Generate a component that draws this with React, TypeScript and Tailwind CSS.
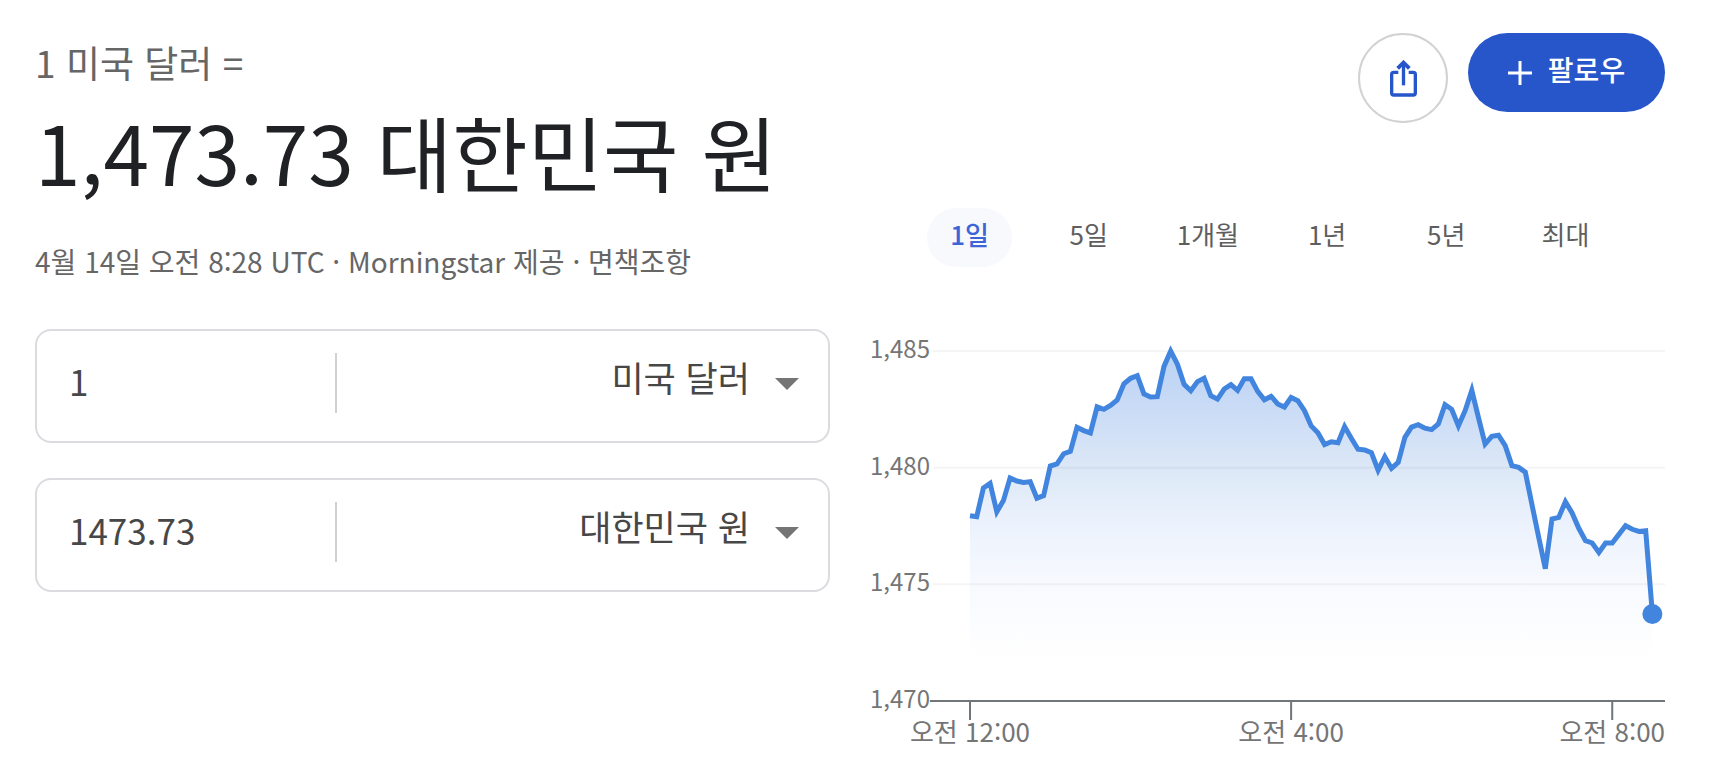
import React, { useState } from 'react';

const PERIODS = ['1일', '5일', '1개월', '1년', '5년', '최대'];
const CURRENCIES = ['미국 달러', '대한민국 원'];

// One price every 5 minutes, starting at midnight
const PRICES = [
  1477.94, 1477.9, 1479.13, 1479.33, 1478.11, 1478.59, 1479.56, 1479.43, 1479.37, 1479.4, 1478.69, 1478.8,
  1480.07, 1480.16, 1480.6, 1480.7, 1481.73, 1481.59, 1481.49, 1482.61, 1482.5, 1482.67, 1482.9, 1483.59,
  1483.83, 1483.94, 1483.16, 1483.03, 1483.04, 1484.34, 1485.0, 1484.44, 1483.57, 1483.3, 1483.69, 1483.83,
  1483.09, 1482.94, 1483.37, 1483.56, 1483.31, 1483.81, 1483.81, 1483.27, 1482.91, 1483.06, 1482.73, 1482.6,
  1483.01, 1482.87, 1482.44, 1481.79, 1481.5, 1480.99, 1481.11, 1481.07, 1481.76, 1481.26, 1480.79, 1480.76,
  1480.64, 1479.89, 1480.47, 1479.97, 1480.23, 1481.3, 1481.74, 1481.84, 1481.69, 1481.63, 1481.87, 1482.7,
  1482.5, 1481.79, 1482.44, 1483.31, 1482.16, 1481.01, 1481.34, 1481.39, 1480.94, 1480.09, 1480.01, 1479.81,
  1478.41, 1477.04, 1475.67, 1477.8, 1477.87, 1478.54, 1478.06, 1477.4, 1476.87, 1476.77, 1476.37, 1476.77,
  1476.77, 1477.14, 1477.51, 1477.36, 1477.27, 1477.3, 1473.73,
];

const CHART = { left: 100, right: 795, top: 22, bottom: 372, labelEnd: 60, step: 6.69 };

const xAt = (index: number) => CHART.left + index * CHART.step;
const yAt = (price: number) => CHART.bottom - ((price - 1470) / 15) * (CHART.bottom - CHART.top);

const Y_LABELS = [1485, 1480, 1475, 1470];
const X_LABELS = [
  { index: 0, label: '오전 12:00' },
  { index: 48, label: '오전 4:00' },
  { index: 96, label: '오전 8:00' },
];

const RateChart: React.FC = () => {
  const line = PRICES.map((price, i) => `${i === 0 ? 'M' : 'L'}${xAt(i).toFixed(1)} ${yAt(price).toFixed(1)}`).join('');
  const last = PRICES.length - 1;
  const area = `${line}V${CHART.bottom}H${CHART.left}Z`;

  return (
    <svg viewBox="0 0 795 425" className="block w-full h-auto overflow-visible" role="img" aria-label="환율 차트">
      <defs>
        <linearGradient id="rate-fill" gradientUnits="userSpaceOnUse" x1="0" y1="22" x2="0" y2="330">
          <stop offset="0" stopColor="#b9d2f4" />
          <stop offset="0.2" stopColor="#cbdcf6" />
          <stop offset="0.38" stopColor="#dce8f7" />
          <stop offset="0.58" stopColor="#edf3fd" />
          <stop offset="0.78" stopColor="#f8fafe" />
          <stop offset="1" stopColor="#ffffff" />
        </linearGradient>
      </defs>

      <path d={area} fill="url(#rate-fill)" />

      {Y_LABELS.map(value => (
        <g key={value}>
          <text x="0" y={yAt(value) + 7} fontSize="24" fill="#757575">
            {value.toLocaleString('en-US')}
          </text>
          {value !== 1470 && (
            <line
              x1={CHART.labelEnd + 3}
              x2={CHART.right}
              y1={yAt(value)}
              y2={yAt(value)}
              stroke="#000000"
              strokeOpacity="0.04"
              strokeWidth="2"
            />
          )}
        </g>
      ))}

      {/* Time axis */}
      <line x1={CHART.labelEnd} x2={CHART.right} y1={CHART.bottom} y2={CHART.bottom} stroke="#70757a" strokeWidth="2" />
      {X_LABELS.map(({ index, label }) => (
        <g key={label}>
          <line x1={xAt(index)} x2={xAt(index)} y1={CHART.bottom} y2="391" stroke="#70757a" strokeWidth="2" />
          <text x={xAt(index)} y="413" fontSize="26" fill="#757575" textAnchor="middle">
            {label}
          </text>
        </g>
      ))}

      <path d={line} fill="none" stroke="#4285de" strokeWidth="5" />
      <circle cx={xAt(last)} cy={yAt(PRICES[last])} r="10" fill="#4285de" />
    </svg>
  );
};

interface CurrencyFieldProps {
  amount: string;
  currency: string;
  onAmountChange: (value: string) => void;
  onCurrencyChange: (value: string) => void;
}

const CurrencyField: React.FC<CurrencyFieldProps> = ({ amount, currency, onAmountChange, onCurrencyChange }) => (
  <div className="flex h-[114px] border-2 border-[#dadce0] rounded-2xl text-[35px] text-[#474747]">
    <input
      type="text"
      inputMode="decimal"
      aria-label="금액"
      value={amount}
      onChange={e => onAmountChange(e.target.value)}
      className="w-[298px] h-full pl-8 pr-4 pb-3 bg-transparent outline-none"
    />
    <div className="w-0.5 h-[60px] mt-[22px] bg-[#d2d2d2]" />
    <div className="relative flex-1 h-full">
      <select
        aria-label="통화"
        value={currency}
        onChange={e => onCurrencyChange(e.target.value)}
        className="w-full h-full pr-[78px] pb-[18px] appearance-none bg-transparent text-right [text-align-last:right] outline-none"
      >
        {CURRENCIES.map(name => (
          <option key={name} value={name}>{name}</option>
        ))}
      </select>
      <svg viewBox="0 0 24 12" className="absolute right-[29px] top-[47px] w-6 h-3 pointer-events-none" fill="#757575">
        <path d="M0 0H24L12 12Z" />
      </svg>
    </div>
  </div>
);

const App: React.FC = () => {
  const [period, setPeriod] = useState('1일');
  const [fromAmount, setFromAmount] = useState('1');
  const [toAmount, setToAmount] = useState('1473.73');
  const [fromCurrency, setFromCurrency] = useState('미국 달러');
  const [toCurrency, setToCurrency] = useState('대한민국 원');

  return (
    <main
      lang="ko"
      className="grid grid-cols-2 gap-10 pl-[35px] pr-[71px] pt-[33px] bg-white font-['Noto_Sans_CJK_KR',sans-serif]"
    >
      {/* Rate and converter */}
      <section>
        <p className="text-[37px] leading-[58px] text-[#666666]">1 미국 달러 =</p>
        <h1 className="text-[82px] leading-[120px] text-[#202124] whitespace-nowrap">1,473.73 대한민국 원</h1>
        <p className="mt-5 text-[28px] leading-[60px] text-[#666666] whitespace-nowrap">
          4월 14일 오전 8:28 UTC · Morningstar 제공 · <a href="#disclaimer">면책조항</a>
        </p>

        <form className="flex flex-col gap-[35px] mt-[38px]">
          <CurrencyField
            amount={fromAmount}
            currency={fromCurrency}
            onAmountChange={setFromAmount}
            onCurrencyChange={setFromCurrency}
          />
          <CurrencyField
            amount={toAmount}
            currency={toCurrency}
            onAmountChange={setToAmount}
            onCurrencyChange={setToCurrency}
          />
        </form>
      </section>

      {/* Actions and chart */}
      <section>
        <div className="flex justify-end items-start gap-5">
          <button
            type="button"
            aria-label="공유"
            className="flex items-center justify-center w-[90px] h-[90px] rounded-full border-2 border-[#d2d2d2]"
          >
            <svg viewBox="0 0 81 111" className="w-[27px] h-[37px]" fill="none" stroke="#2756cb" strokeWidth="10">
              <path d="M25 37H11Q5 37 5 43V98Q5 105 11 105H70Q76 105 76 98V43Q76 37 70 37H56" />
              <path d="M40.500 76V12" />
              <path d="M23 25L40.500 8L58 25" strokeWidth="12" />
            </svg>
          </button>
          <button
            type="button"
            className="flex items-center justify-center gap-4 w-[197px] h-[79px] pb-2 rounded-full bg-[#2756cb] text-white text-[28px] font-medium"
          >
            <svg viewBox="0 0 24 24" className="w-6 h-6 mt-2" stroke="currentColor" strokeWidth="3">
              <path d="M12 0V24M0 12H24" />
            </svg>
            팔로우
          </button>
        </div>

        <div className="grid grid-cols-6 px-10 mt-[85px]">
          {PERIODS.map(name => (
            <button
              key={name}
              type="button"
              aria-pressed={period === name}
              onClick={() => setPeriod(name)}
              className={`justify-self-center min-w-[85px] h-[59px] pb-2 rounded-full text-[26px] whitespace-nowrap ${
                period === name ? 'bg-[#f7f9fc] text-[#3c66d6] font-medium' : 'text-[#5e5e5e]'
              }`}
            >
              {name}
            </button>
          ))}
        </div>

        <div className="mt-[62px]">
          <RateChart />
        </div>
      </section>
    </main>
  );
};

export default App;
